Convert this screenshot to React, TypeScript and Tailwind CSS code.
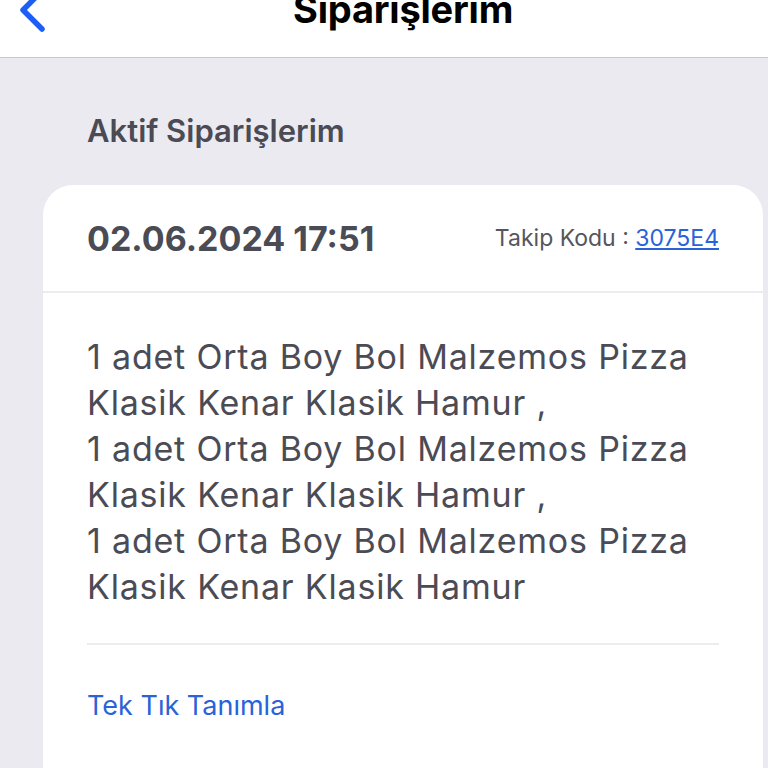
const items = [
  ["1 adet Orta Boy Bol Malzemos Pizza", "Klasik Kenar Klasik Hamur ,"],
  ["1 adet Orta Boy Bol Malzemos Pizza", "Klasik Kenar Klasik Hamur ,"],
  ["1 adet Orta Boy Bol Malzemos Pizza", "Klasik Kenar Klasik Hamur"],
];

export default function App() {
  return (
    <div
      className="h-[768px] w-[768px] overflow-hidden bg-[#eaeaf0]"
      style={{ fontFamily: "Inter, 'Noto Sans', sans-serif" }}
    >
      {/* Header */}
      <header className="relative h-[58px] border-b border-[#c8c8cc] bg-white">
        <svg
          className="absolute left-[14px] top-[-12px]"
          width="36"
          height="48"
          viewBox="0 0 36 48"
          fill="none"
        >
          <path
            d="M27 4 L9 22 L28 41"
            stroke="#1d5ff5"
            strokeWidth="5.5"
            strokeLinecap="round"
            strokeLinejoin="round"
          />
        </svg>
        <h1 className="absolute left-[293px] top-[-15px] text-[38px] font-bold leading-[48px] tracking-[-0.2px] text-black">
          Siparişlerim
        </h1>
      </header>

      <main className="pl-[43px] pr-[5px]">
        <h2 className="flex h-[127px] items-center pl-[44px] pt-[20px] text-[31px] font-semibold text-[#4b4b55]">
          Aktif Siparişlerim
        </h2>

        <section className="rounded-t-[30px] bg-white">
          <div className="flex h-[106px] items-center justify-between px-[44px]">
            <span className="text-[34px] font-bold text-[#4b4b55]">02.06.2024 17:51</span>
            <span className="text-[23px] text-[#55555e]">
              Takip Kodu :{" "}
              <a className="text-[#2a63d8] underline underline-offset-2">3075E4</a>
            </span>
          </div>
          <div className="h-[2px] bg-[#ececf0]" />

          <div className="px-[44px] pt-[41px] pb-[32px]">
            {items.map((lines, i) => (
              <p key={i} className="text-[34px] leading-[46px] tracking-[0.8px] text-[#4b4b55]">
                {lines[0]}
                <br />
                {lines[1]}
              </p>
            ))}
            <div className="mt-[33px] h-[2px] bg-[#ececf0]" />
            <div className="flex h-[122px] items-center text-[27px] text-[#2a63d8]">
              Tek Tık Tanımla
            </div>
          </div>
        </section>
      </main>
    </div>
  );
}
